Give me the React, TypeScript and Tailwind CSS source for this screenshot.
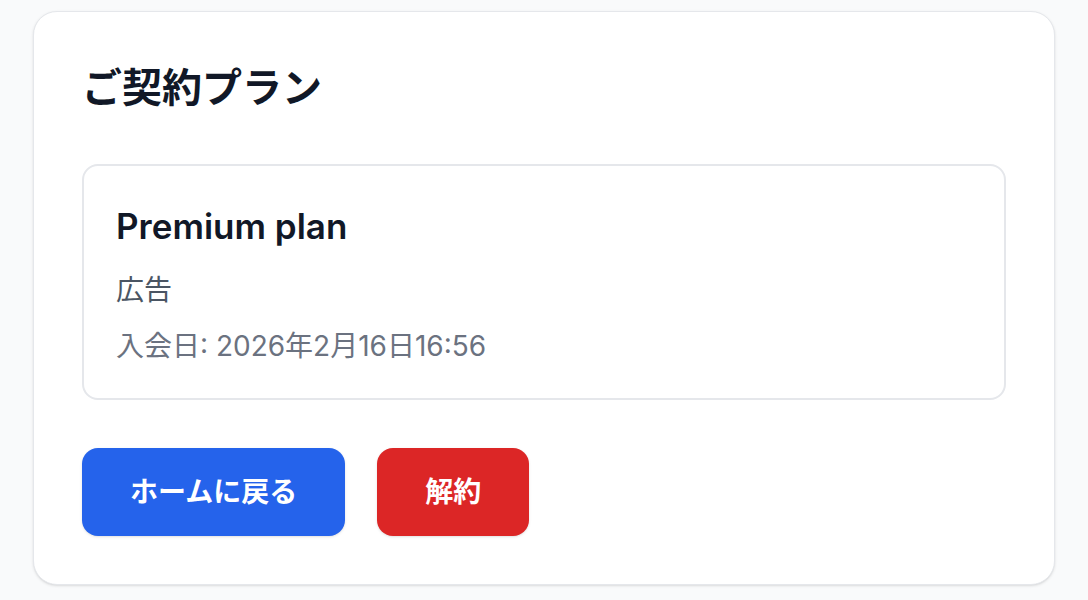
export default function App() {
  return (
    <div
      className="min-h-screen bg-[#f9fafb] px-[33px] pt-[11px] pb-8"
      style={{ fontFamily: '"Inter", "Noto Sans CJK JP", sans-serif' }}
    >
      <section className="bg-white border border-[#e5e7eb] rounded-3xl shadow-sm p-12">
        <h1 className="text-[40px] leading-[56px] font-bold text-[#111827]">ご契約プラン</h1>

        <div className="mt-12 border-2 border-[#e5e7eb] rounded-2xl p-8">
          <h2 className="text-[35px] leading-[56px] font-semibold text-[#111827]">Premium plan</h2>
          <p className="mt-4 text-[28px] leading-10 text-[#4b5563]">広告</p>
          <p className="mt-4 text-[28px] leading-10 text-[#6b7280]">入会日: 2026年2月16日16:56</p>
        </div>

        <div className="mt-12 flex items-center gap-8">
          <button className="bg-[#2563eb] text-white px-12 py-6 rounded-2xl text-[28px] leading-10 font-bold shadow-sm">
            ホームに戻る
          </button>
          <button className="bg-[#dc2626] text-white px-12 py-6 rounded-2xl text-[28px] leading-10 font-bold shadow-sm">
            解約
          </button>
        </div>
      </section>
    </div>
  );
}
